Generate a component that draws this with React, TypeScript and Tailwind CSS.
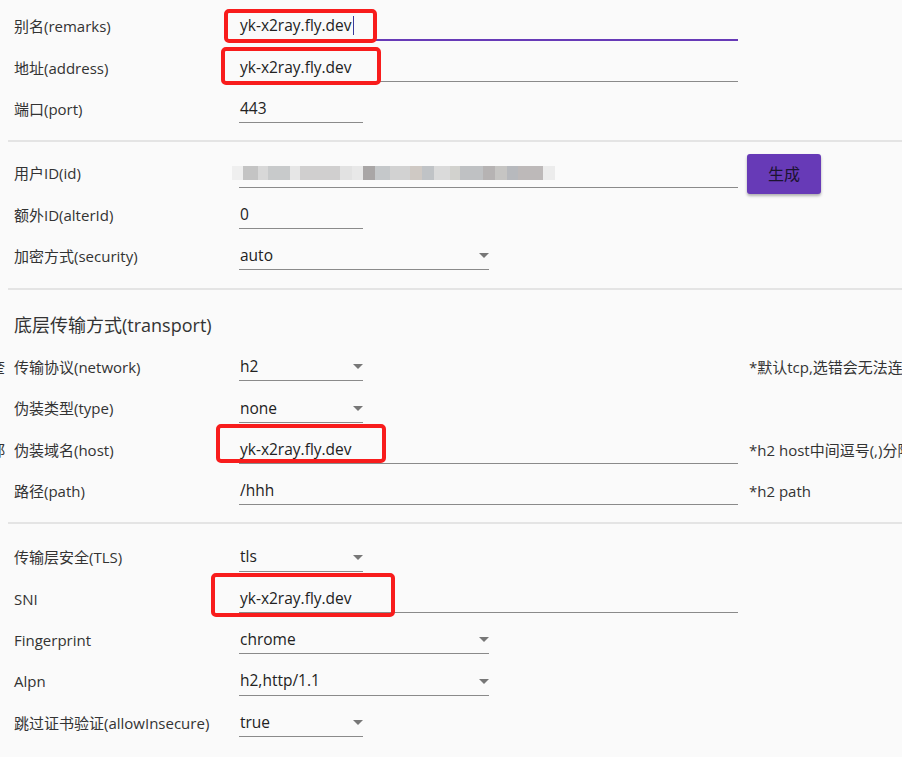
import React from "react";

type Field = {
  label: string;
  value?: string;
  width: "narrow" | "medium" | "wide";
  select?: boolean;
  focused?: boolean;
  hint?: string;
  edge?: string;
  blurred?: boolean;
  button?: string;
};

const widthClass = {
  narrow: "w-[124px]",
  medium: "w-[250px]",
  wide: "w-[499px]",
};

const blurBlocks = [
  "w-[11px] bg-[#efefef]",
  "w-[15px] bg-[#c4c4c4]",
  "w-[10px] bg-[#d8d8d8]",
  "w-[22px] bg-[#c8cacb]",
  "w-[10px] bg-[#e6e6e6]",
  "w-[40px] bg-[#d0cfcf]",
  "w-[12px] bg-[#e2e2e2]",
  "w-[11px] bg-[#e8e8e8]",
  "w-[12px] bg-[#a9a6a6]",
  "w-[15px] bg-[#c5c8ca]",
  "w-[20px] bg-[#d2d2d2]",
  "w-[12px] bg-[#cfc9c4]",
  "w-[12px] bg-[#c0c3c6]",
  "w-[16px] bg-[#dadada]",
  "w-[10px] bg-[#d2d2ce]",
  "w-[23px] bg-[#bfc1c3]",
  "w-[12px] bg-[#b6b3b3]",
  "w-[12px] bg-[#c6c5c3]",
  "w-[11px] bg-[#b7b9bd]",
  "w-[25px] bg-[#bdb9b9]",
  "w-[12px] bg-[#ececec]",
];

const Arrow = () => (
  <svg width="10" height="5" viewBox="0 0 10 5" className="shrink-0">
    <path d="M0 0h10L5 5z" fill="#777" />
  </svg>
);

const Row = ({ f }: { f: Field }) => (
  <div className="flex items-center h-[41.3px]">
    <div className="w-[5px] shrink-0 overflow-hidden flex justify-end text-[15px] text-[#333]">
      {f.edge && <span className="whitespace-nowrap">{f.edge}</span>}
    </div>
    <div className="w-[234px] shrink-0 pl-[9px] text-[15px] text-[#333] whitespace-nowrap">
      {f.label}
    </div>
    <div className="w-[510px] shrink-0 flex items-center">
      <div
        className={`${widthClass[f.width]} h-[28px] flex items-center justify-between shrink-0 ${
          f.focused ? "border-b-2 border-[#673ab7]" : "border-b border-[#8a8a8a]"
        }`}
      >
        {f.blurred ? (
          <div className="flex items-center -ml-[7px] h-[18px]">
            {blurBlocks.map((c, i) => (
              <div key={i} className={`${c} h-[14px]`} />
            ))}
          </div>
        ) : (
          <div className="flex items-center text-[15.5px] text-[#222] pl-px">
            <span>{f.value}</span>
            {f.focused && <span className="w-px h-[19px] bg-[#3a3a9a] ml-px" />}
          </div>
        )}
        {f.select && <Arrow />}
      </div>
    </div>
    {f.button && (
      <button className="-ml-[2px] shrink-0 w-[74px] h-[40px] rounded-[3px] bg-[#673ab7] text-[16px] text-[#1b1330] shadow-[0_2px_3px_rgba(0,0,0,0.3)]">
        {f.button}
      </button>
    )}
    {f.hint && (
      <div className="text-[15px] text-[#333] whitespace-nowrap">{f.hint}</div>
    )}
  </div>
);

const Divider = () => <div className="ml-2 h-[2px] bg-[#e4e4e4]" />;

const sec1: Field[] = [
  { label: "别名(remarks)", value: "yk-x2ray.fly.dev", width: "wide", focused: true },
  { label: "地址(address)", value: "yk-x2ray.fly.dev", width: "wide" },
  { label: "端口(port)", value: "443", width: "narrow" },
];

const sec2: Field[] = [
  { label: "用户ID(id)", width: "wide", blurred: true, button: "生成" },
  { label: "额外ID(alterId)", value: "0", width: "narrow" },
  { label: "加密方式(security)", value: "auto", width: "medium", select: true },
];

const sec3: Field[] = [
  { label: "传输协议(network)", value: "h2", width: "narrow", select: true, hint: "*默认tcp,选错会无法连接", edge: "奎" },
  { label: "伪装类型(type)", value: "none", width: "narrow", select: true },
  { label: "伪装域名(host)", value: "yk-x2ray.fly.dev", width: "wide", hint: "*h2 host中间逗号(,)分隔", edge: "郚" },
  { label: "路径(path)", value: "/hhh", width: "wide", hint: "*h2 path" },
];

const sec4: Field[] = [
  { label: "传输层安全(TLS)", value: "tls", width: "narrow", select: true },
  { label: "SNI", value: "yk-x2ray.fly.dev", width: "wide" },
  { label: "Fingerprint", value: "chrome", width: "medium", select: true },
  { label: "Alpn", value: "h2,http/1.1", width: "medium", select: true },
  { label: "跳过证书验证(allowInsecure)", value: "true", width: "narrow", select: true },
];

export default function App() {
  return (
    <div
      className="relative w-full h-[757px] overflow-hidden bg-[#fafafa]"
      style={{ fontFamily: '"Open Sans", "Noto Sans CJK SC", sans-serif' }}
    >
      <div className="pt-[6px]">
        {sec1.map((f) => (
          <Row key={f.label} f={f} />
        ))}
      </div>
      <div className="mt-[10px]">
        <Divider />
      </div>
      <div className="pt-[11px]">
        {sec2.map((f) => (
          <Row key={f.label} f={f} />
        ))}
      </div>
      <div className="mt-[11px]">
        <Divider />
      </div>
      <div className="pl-[14px] pt-[23px] h-[57px] text-[18px] leading-[24px] text-[#333]">
        底层传输方式(transport)
      </div>
      {sec3.map((f) => (
        <Row key={f.label} f={f} />
      ))}
      <div className="mt-[10px]">
        <Divider />
      </div>
      <div className="pt-[13px]">
        {sec4.map((f) => (
          <Row key={f.label} f={f} />
        ))}
      </div>

      {/* red annotation boxes */}
      <div className="absolute left-[224px] top-[9px] w-[153px] h-[34px] border-[4px] border-[#f81c1c] rounded-[5px]" />
      <div className="absolute left-[221px] top-[47px] w-[160px] h-[38px] border-[4px] border-[#f81c1c] rounded-[5px]" />
      <div className="absolute left-[216px] top-[424px] w-[170px] h-[39px] border-[4px] border-[#f81c1c] rounded-[5px]" />
      <div className="absolute left-[211px] top-[573px] w-[184px] h-[44px] border-[4px] border-[#f81c1c] rounded-[5px]" />
    </div>
  );
}
